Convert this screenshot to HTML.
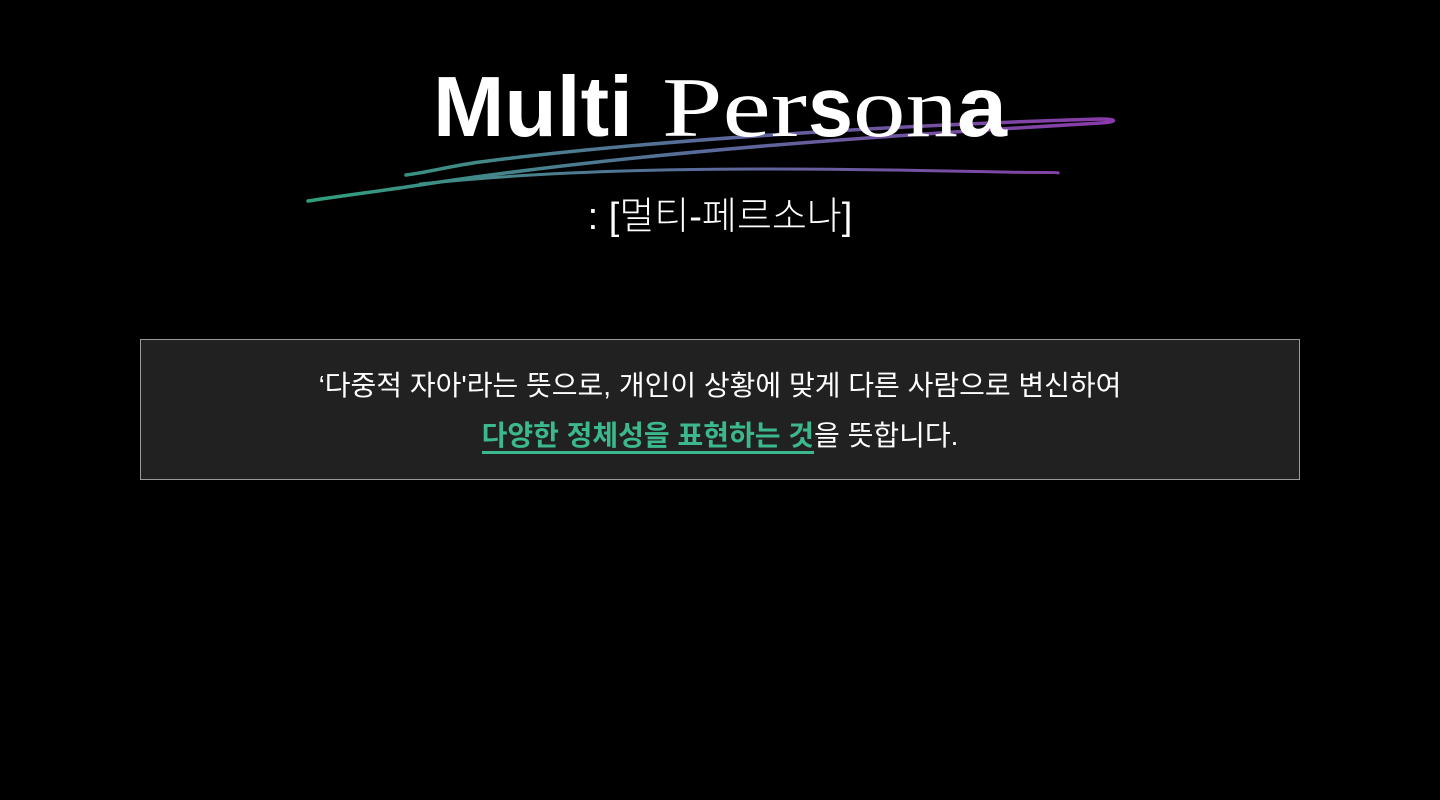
<!DOCTYPE html>
<html><head><meta charset="utf-8"><style>
html,body{margin:0;padding:0;background:#000;width:1440px;height:800px;overflow:hidden}
.box{position:absolute;left:140px;top:339px;width:1158px;height:139px;background:#212121;border:1px solid #9a9a9a;text-align:center;color:#fff;font-family:"Liberation Sans","Noto Sans CJK KR",sans-serif;font-size:28px;letter-spacing:0}
.l1{position:absolute;left:0;right:0;top:26px;line-height:40px}
.l2{position:absolute;left:0;right:0;top:76px;line-height:40px}
.g{color:#3bb88c;font-weight:bold;border-bottom:3px solid #3bb88c}
.sub{position:absolute;left:0;width:1440px;top:185px;text-align:center;color:#fff;font-family:"Liberation Sans","Noto Sans CJK KR",sans-serif;font-size:38px;font-weight:300}
</style></head><body>
<svg width="1440" height="260" style="position:absolute;left:0;top:0">
<defs><linearGradient id="gr" x1="300" y1="0" x2="1115" y2="0" gradientUnits="userSpaceOnUse"><stop offset="0" stop-color="#2fa07c"/><stop offset="0.5" stop-color="#5a6a9a"/><stop offset="1" stop-color="#8a3aa8"/></linearGradient></defs>
<path d="M406 175 C430 172 450 166 480 162 C650 140 900 125 1100 119 C1118 119 1118 122 1100 123 C900 135 650 150 420 185 C380 191 340 196 308 201" fill="none" stroke="url(#gr)" stroke-width="3.5" stroke-linecap="round"/>
<path d="M420 184 C600 165 800 168 1000 172 C1040 173 1060 172 1058 173" fill="none" stroke="url(#gr)" stroke-width="3" stroke-linecap="round"/>
<g fill="#fff" font-size="85">
<text x="433" y="136" textLength="200" lengthAdjust="spacingAndGlyphs" font-family="Liberation Sans" font-weight="bold">Multi</text>
<text x="662" y="136" textLength="145" lengthAdjust="spacingAndGlyphs" font-family="Liberation Serif">Per</text>
<text x="808" y="136" textLength="45" lengthAdjust="spacingAndGlyphs" font-family="Liberation Sans" font-weight="bold">s</text>
<text x="853" y="136" textLength="105" lengthAdjust="spacingAndGlyphs" font-family="Liberation Serif">on</text>
<text x="957" y="136" textLength="50" lengthAdjust="spacingAndGlyphs" font-family="Liberation Sans" font-weight="bold">a</text>
</g>
</svg>
<div class="sub">: [멀티-페르소나]</div>
<div class="box">
<div class="l1">‘다중적 자아'라는 뜻으로, 개인이 상황에 맞게 다른 사람으로 변신하여</div>
<div class="l2"><span class="g">다양한 정체성을 표현하는 것</span>을 뜻합니다.</div>
</div>
</body></html>
